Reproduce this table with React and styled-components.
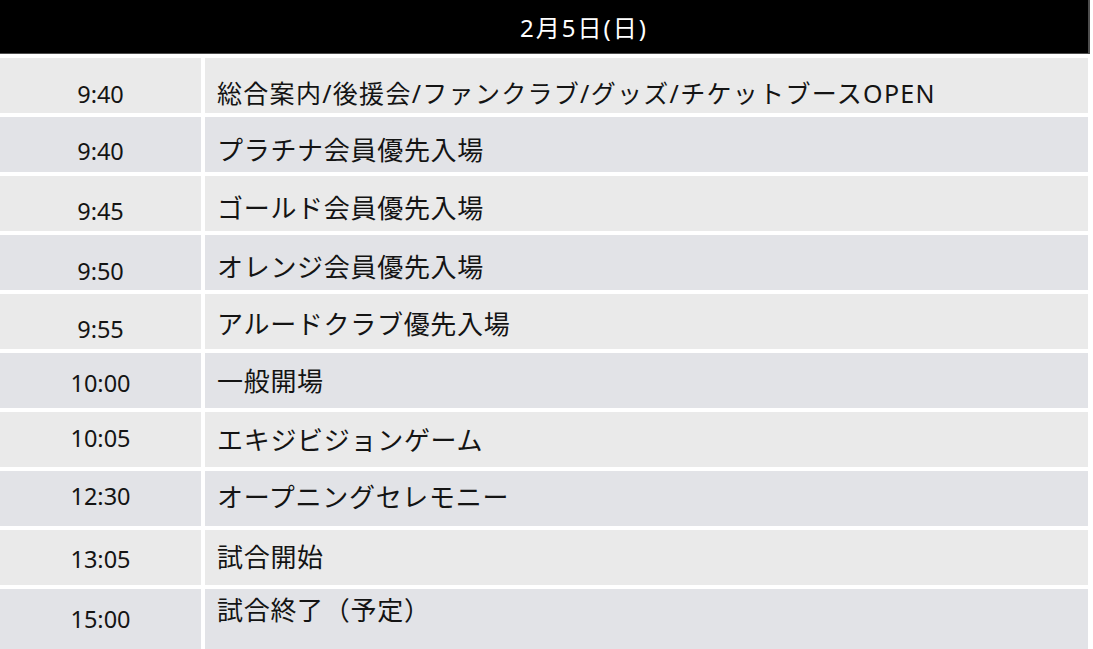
import React from 'react';
import styled, { createGlobalStyle } from 'styled-components';

const GlobalStyle = createGlobalStyle`
  html, body {
    margin: 0;
    padding: 0;
    background: #ffffff;
  }
`;

const SCHEDULE = [
  { time: '9:40', label: '総合案内/後援会/ファンクラブ/グッズ/チケットブースOPEN', small: true, timeShift: 8, textShift: 6 },
  { time: '9:40', label: 'プラチナ会員優先入場', timeShift: 6, textShift: 4 },
  { time: '9:45', label: 'ゴールド会員優先入場', timeShift: 7, textShift: 3 },
  { time: '9:50', label: 'オレンジ会員優先入場', timeShift: 8, textShift: 3 },
  { time: '9:55', label: 'アルードクラブ優先入場', timeShift: 7, textShift: 1 },
  { time: '10:00', label: '一般開場', timeShift: 2, textShift: -1 },
  { time: '10:05', label: 'エキジビジョンゲーム', timeShift: -2, textShift: -1 },
  { time: '12:30', label: 'オープニングセレモニー', timeShift: -3, textShift: -3 },
  { time: '13:05', label: '試合開始', timeShift: 1, textShift: -2 },
  { time: '15:00', label: '試合終了（予定）', timeShift: 0, textShift: -10 },
];

const Page = styled.div`
  width: 1090px;
  display: flex;
  flex-direction: column;
  gap: 4px;
`;

const Header = styled.div`
  height: 54px;
  box-sizing: border-box;
  background: #000000;
  border-right: 2px solid #4d4d4d;
  border-bottom: 1px solid #4d4d4d;
  display: flex;
  align-items: center;
  justify-content: center;
  padding-left: 80px;
  color: #ffffff;
  font-family: 'Noto Sans', 'Noto Sans CJK JP', sans-serif;
  font-size: 24px;
  letter-spacing: 2px;
`;

const Table = styled.div`
  width: 1088px;
  display: grid;
  grid-template-columns: 201px 1fr;
  grid-template-rows: repeat(9, 55px) 60px;
  column-gap: 4px;
  row-gap: 4px;
`;

const Cell = styled.div`
  display: flex;
  align-items: center;
  background: ${({ $shade }) => ($shade ? '#e2e3e7' : '#eaeaea')};
  color: #141414;
  font-family: 'Noto Sans', 'Noto Sans CJK JP', sans-serif;
`;

const TimeCell = styled(Cell)`
  justify-content: center;
  font-size: 23.5px;
`;

const LabelCell = styled(Cell)`
  padding-left: 12px;
  font-size: ${({ $small }) => ($small ? '25px' : '26px')};
  letter-spacing: ${({ $small }) => ($small ? '1.3px' : '0.7px')};
  white-space: nowrap;
`;

const Shifted = styled.span`
  position: relative;
  top: ${({ $shift }) => $shift}px;
`;

export default function App() {
  return (
    <>
      <GlobalStyle />
      <Page>
        <Header>2月5日(日)</Header>
        <Table>
          {SCHEDULE.map((row, i) => (
            <React.Fragment key={i}>
              <TimeCell $shade={i % 2 === 1}>
                <Shifted $shift={row.timeShift}>{row.time}</Shifted>
              </TimeCell>
              <LabelCell $shade={i % 2 === 1} $small={row.small}>
                <Shifted $shift={row.textShift}>{row.label}</Shifted>
              </LabelCell>
            </React.Fragment>
          ))}
        </Table>
      </Page>
    </>
  );
}
